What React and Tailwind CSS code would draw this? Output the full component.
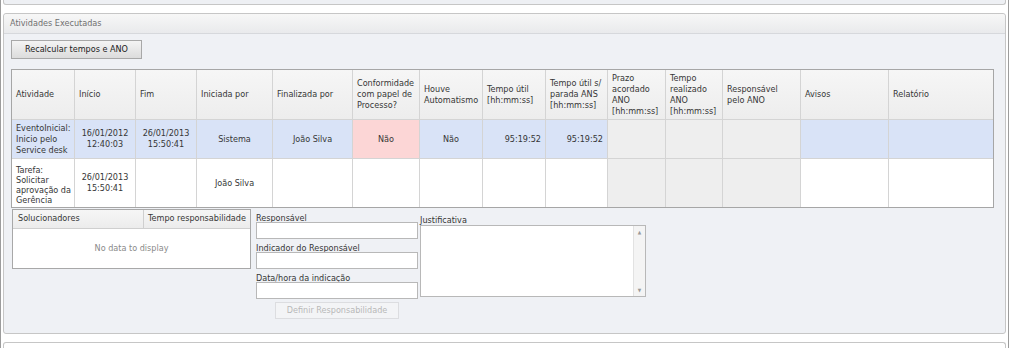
import React from "react";

const gridCols =
  "grid-cols-[63px_61px_61px_76px_80px_67px_63px_63px_62px_58px_57px_78px_88px_104px]";

const headers = [
  ["Atividade"],
  ["Início"],
  ["Fim"],
  ["Iniciada por"],
  ["Finalizada por"],
  ["Conformidade", "com papel de", "Processo?"],
  ["Houve", "Automatismo"],
  ["Tempo útil", "[hh:mm:ss]"],
  ["Tempo útil s/", "parada ANS", "[hh:mm:ss]"],
  ["Prazo", "acordado", "ANO", "[hh:mm:ss]"],
  ["Tempo", "realizado", "ANO", "[hh:mm:ss]"],
  ["Responsável", "pelo ANO"],
  ["Avisos"],
  ["Relatório"],
];

const align = [
  "justify-start text-left",
  "justify-center text-center",
  "justify-center text-center",
  "justify-center text-center",
  "justify-center text-center",
  "justify-center text-center",
  "justify-center text-center",
  "justify-end text-right",
  "justify-end text-right",
  "justify-center text-center",
  "justify-center text-center",
  "justify-center text-center",
  "justify-center text-center",
  "justify-center text-center",
];

const row1 = [
  ["EventoInicial:", "Inicio pelo", "Service desk"],
  ["16/01/2012", "12:40:03"],
  ["26/01/2013", "15:50:41"],
  ["Sistema"],
  ["João Silva"],
  ["Não"],
  ["Não"],
  ["95:19:52"],
  ["95:19:52"],
  [],
  [],
  [],
  [],
  [],
];

const row2 = [
  ["Tarefa:", "Solicitar", "aprovação da", "Gerência"],
  ["26/01/2013", "15:50:41"],
  [],
  ["João Silva"],
  [],
  [],
  [],
  [],
  [],
  [],
  [],
  [],
  [],
  [],
];

function Lines({ lines, tight }) {
  return (
    <div className={tight ? "leading-[10px]" : "leading-[11px]"}>
      {lines.map((l, i) => (
        <div key={i} className="whitespace-nowrap">
          {l}
        </div>
      ))}
    </div>
  );
}

function cellBg(row, i) {
  if (i >= 9 && i <= 11) return "bg-[#eeeeee]";
  if (row === 1) {
    if (i === 5) return "bg-[#fcd6d6]";
    return "bg-[#d9e3f7]";
  }
  return "bg-white";
}

export default function App() {
  return (
    <div
      className="w-[1009px] h-[348px] overflow-hidden bg-white border-l border-r border-[#9c9c9c] text-[9px] text-[#363636]"
      style={{ fontFamily: '"DejaVu Sans Condensed", "DejaVu Sans", Verdana, sans-serif' }}
    >
      {/* previous panel bottom */}
      <div className="mx-[2px] h-[5px] bg-[#eef0f4] border-l border-r border-b border-[#c6c6c6] rounded-b-[3px]" />

      {/* main panel */}
      <div className="mt-[8px] mx-[2px] h-[321px] border border-[#c6c6c6] rounded-[3px] bg-[#eff1f5] flex flex-col">
        <div className="h-[20px] border-b border-[#d6d8dc] bg-gradient-to-b from-[#f7f7f7] to-[#e9eaec] rounded-t-[3px] flex items-center pl-[6px] text-[#707070]">
          Atividades Executadas
        </div>
        <div className="pl-[7px] pt-[6px] flex flex-col">
          <button className="w-[131px] h-[19px] border border-[#a8a8a8] bg-gradient-to-b from-[#f4f4f4] to-[#dcdcdc] text-[#222] flex items-center justify-center">
            Recalcular tempos e ANO
          </button>

          {/* table */}
          <div className="mt-[10px] w-[983px] border border-[#a6a6a6]">
            <div className={`grid ${gridCols}`}>
              {headers.map((h, i) => (
                <div
                  key={"h" + i}
                  className={`h-[50px] flex items-center px-[4px] border-b border-[#d4d4d4] bg-gradient-to-b from-[#f6f6f6] to-[#ededed] ${
                    i < 13 ? "border-r" : ""
                  }`}
                >
                  <Lines lines={h} />
                </div>
              ))}
              {row1.map((c, i) => (
                <div
                  key={"a" + i}
                  className={`h-[39px] flex items-center px-[4px] border-b border-[#d4d4d4] ${cellBg(1, i)} ${
                    align[i]
                  } ${i < 13 ? "border-r" : ""}`}
                >
                  <Lines lines={c} />
                </div>
              ))}
              {row2.map((c, i) => (
                <div
                  key={"b" + i}
                  className={`h-[48px] flex items-center px-[4px] border-[#d4d4d4] ${cellBg(2, i)} ${
                    align[i]
                  } ${i < 13 ? "border-r" : ""} ${i === 0 ? "pt-[4px]" : ""}`}
                >
                  <Lines lines={c} tight={i === 0} />
                </div>
              ))}
            </div>
          </div>

          {/* bottom section */}
          <div className="mt-[1px] flex">
            {/* solucionadores grid */}
            <div className="ml-[1px] w-[239px] h-[60px] border border-[#a8a8a8] bg-white flex flex-col">
              <div className="h-[19px] flex border-b border-[#cfcfcf] bg-gradient-to-b from-[#f6f6f6] to-[#ececec]">
                <div className="w-[131px] border-r border-[#cfcfcf] flex items-center pl-[5px]">
                  Solucionadores
                </div>
                <div className="flex-1 flex items-center justify-center">Tempo responsabilidade</div>
              </div>
              <div className="flex-1 flex items-center justify-center text-[#8a8a8a]">
                No data to display
              </div>
            </div>

            {/* fields */}
            <div className="ml-[5px] w-[162px] flex flex-col">
              <div className="h-[13px] leading-[19px] overflow-visible whitespace-nowrap">Responsável</div>
              <div className="h-[17px] border border-[#b8b8b8] bg-white" />
              <div className="h-[13px] leading-[19px] overflow-visible whitespace-nowrap">Indicador do Responsável</div>
              <div className="h-[17px] border border-[#b8b8b8] bg-white" />
              <div className="h-[13px] leading-[19px] overflow-visible whitespace-nowrap">Data/hora da indicação</div>
              <div className="h-[17px] border border-[#b8b8b8] bg-white" />
              <div className="mt-[3px] ml-[19px] w-[124px] h-[17px] border border-[#dcdde0] bg-[#f3f4f6] text-[#b8b8b8] flex items-center justify-center">
                Definir Responsabilidade
              </div>
            </div>

            {/* justificativa */}
            <div className="ml-[2px] flex flex-col">
              <div className="h-[16px] pt-[7px] leading-[9px]">Justificativa</div>
              <div className="w-[226px] h-[72px] border border-[#b8b8b8] bg-white flex justify-end">
                <div className="w-[12px] h-full border-l border-[#e2e2e2] bg-[#f4f4f4] flex flex-col justify-between items-center text-[#999] text-[5px] leading-[8px] py-[2px]">
                  <span>▲</span>
                  <span>▼</span>
                </div>
              </div>
            </div>
          </div>
        </div>
      </div>

      {/* next panel top */}
      <div className="mt-[8px] mx-[2px] h-[20px] border-l border-r border-t border-[#c6c6c6] rounded-t-[3px] bg-white" />
    </div>
  );
}
